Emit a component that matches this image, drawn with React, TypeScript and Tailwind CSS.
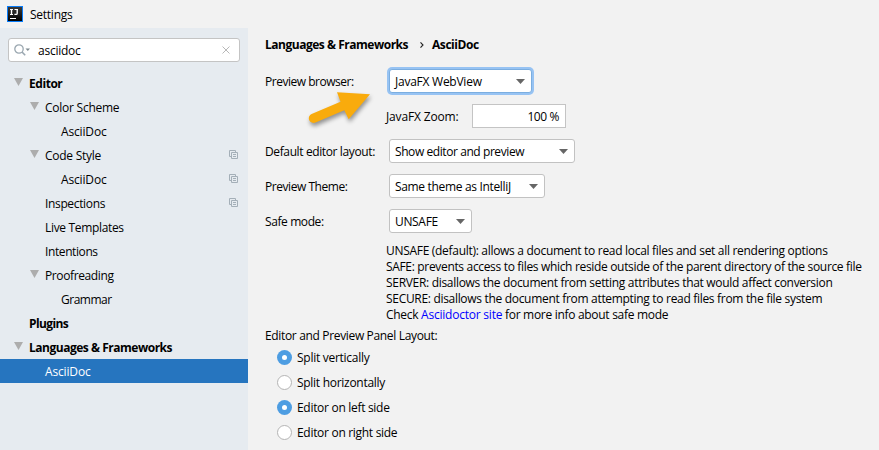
import React from 'react';

type Node = { label: string; indent: string; arrow?: boolean; bold?: boolean; copy?: boolean; selected?: boolean; track: string };

const nodes: Node[] = [
  { label: 'Editor', indent: 'pl-[13px]', arrow: true, bold: true, track: 'tracking-[-0.45px]' },
  { label: 'Color Scheme', indent: 'pl-[29px]', arrow: true, track: 'tracking-[-0.25px]' },
  { label: 'AsciiDoc', indent: 'pl-[45px]', track: 'tracking-[-0.15px]' },
  { label: 'Code Style', indent: 'pl-[29px]', arrow: true, copy: true, track: 'tracking-[-0.25px]' },
  { label: 'AsciiDoc', indent: 'pl-[45px]', copy: true, track: 'tracking-[-0.15px]' },
  { label: 'Inspections', indent: 'pl-[29px]', copy: true, track: 'tracking-[-0.35px]' },
  { label: 'Live Templates', indent: 'pl-[29px]', track: 'tracking-[-0.33px]' },
  { label: 'Intentions', indent: 'pl-[29px]', track: 'tracking-[-0.4px]' },
  { label: 'Proofreading', indent: 'pl-[29px]', arrow: true, track: 'tracking-[-0.38px]' },
  { label: 'Grammar', indent: 'pl-[45px]', track: 'tracking-[-0.5px]' },
  { label: 'Plugins', indent: 'pl-[13px]', bold: true, track: 'tracking-[-0.6px]' },
  { label: 'Languages & Frameworks', indent: 'pl-[13px]', arrow: true, bold: true, track: 'tracking-[-0.48px]' },
  { label: 'AsciiDoc', indent: 'pl-[29px]', selected: true, track: 'tracking-[-0.15px]' },
];

function CopyIcon() {
  return (
    <svg className="mr-[10px] mb-px ml-auto h-[9px] w-[9px]" viewBox="0 0 9 9" fill="none" stroke="#a4afb8">
      <path d="M2.5 6.5h-2v-6h6v2M2.5 2.5h6v6h-6zM4 4.5h3M4 6.5h3" />
    </svg>
  );
}

function TreeRow({ node }: { node: Node }) {
  return (
    <div className={`flex h-6 items-center ${node.indent} ${node.selected ? 'bg-[#2675bf] text-white' : ''}`}>
      <span className="flex w-4 shrink-0">
        {node.arrow && (
          <svg className="mb-0.5 ml-px h-2 w-[9px]" viewBox="0 0 9 8">
            <path d="M0 0h9L4.5 8z" fill="#adadad" />
          </svg>
        )}
      </span>
      <span className={`pt-0.5 ${node.bold ? 'font-bold' : ''} ${node.track}`}>{node.label}</span>
      {node.copy && <CopyIcon />}
    </div>
  );
}

function Select({ label, width, track, focused }: { label: string; width: string; track: string; focused?: boolean }) {
  return (
    <div
      className={`flex h-6 items-center rounded-[3px] border bg-white pr-[6px] pl-[5px] ${width} ${
        focused ? 'border-[#7baee0] ring-2 ring-[#97c3f3]' : 'border-[#c2c2c2]'
      }`}
    >
      <span className={`pt-0.5 ${track}`}>{label}</span>
      <svg className="ml-auto h-[5px] w-[9px]" viewBox="0 0 9 5">
        <path d="M0 0h9L4.5 5z" fill="#666" />
      </svg>
    </div>
  );
}

function Field({ label, track, children }: { label: string; track: string; children: React.ReactNode }) {
  return (
    <div className="flex h-6 items-center">
      <span className={`w-[124px] shrink-0 pt-0.5 ${track}`}>{label}</span>
      {children}
    </div>
  );
}

function Radio({ label, checked, track }: { label: string; checked?: boolean; track: string }) {
  return (
    <div className="flex h-[25px] items-center gap-[5px]">
      <span
        className={`flex size-[15px] items-center justify-center rounded-full ${
          checked ? 'bg-[#4d9de2]' : 'border border-[#b4b4b4] bg-white'
        }`}
      >
        {checked && <span className="size-[5px] rounded-full bg-white" />}
      </span>
      <span className={`pt-px ${track}`}>{label}</span>
    </div>
  );
}

export default function App() {
  return (
    <div className="relative flex h-[450px] w-[879px] flex-col overflow-hidden bg-[#f2f2f2] font-['Open_Sans','Noto_Sans',sans-serif] text-[12px] leading-4 whitespace-nowrap text-black">
      <header className="flex h-7 shrink-0 items-center pl-[7px]">
        <svg className="size-4" viewBox="0 0 16 16">
          <defs>
            <linearGradient id="tile" x1="0" y1="0" x2="0" y2="1">
              <stop offset="0" stopColor="#3a3a3a" />
              <stop offset="1" stopColor="#000" />
            </linearGradient>
          </defs>
          <path d="M0 0h16v16H0z" fill="#087cfa" />
          <path d="M1 1h14v14H1z" fill="url(#tile)" />
          <path d="M3 3.5h3M3 8.5h3M7.5 3.5H11M3 12.5h6" stroke="#fff" fill="none" />
          <path d="M4.5 3v6M10.2 3v4.2q0 1.2-1 1.2H7.4" stroke="#fff" strokeWidth="1.4" fill="none" />
        </svg>
        <span className="ml-[7px] pt-0.5 tracking-[-0.25px]">Settings</span>
      </header>
      <div className="flex min-h-0 flex-1">
        <aside className="w-[248px] shrink-0 bg-[#e6ebf0] pt-[10px]">
          <div className="ml-2 flex h-6 w-[232px] items-center rounded-[3px] border border-[#c4c4c4] bg-white pl-[5px]">
            <svg className="h-3 w-4" viewBox="0 0 16 12" fill="none" stroke="#9aa7b0" strokeWidth="1.3">
              <circle cx="5" cy="5" r="4.2" />
              <path d="M8 8l3.2 3.2" strokeWidth="1.6" />
              <path d="M11.5 4.5h4.6L13.8 7z" fill="#7f8b91" stroke="none" />
            </svg>
            <span className="ml-[8px] pt-0.5 tracking-[-0.25px]">asciidoc</span>
            <svg className="mr-[9px] ml-auto size-2" viewBox="0 0 8 8" stroke="#b8b8b8">
              <path d="M.5.5l7 7M7.5.5l-7 7" />
            </svg>
          </div>
          <div className="mt-[9px]">
            {nodes.map((node, i) => (
              <TreeRow key={i} node={node} />
            ))}
          </div>
        </aside>
        <main className="flex-1 pt-[9px] pl-[17px]">
          <div className="flex font-bold">
            <span className="w-[155px] tracking-[-0.48px]">Languages &amp; Frameworks</span>
            <svg className="mt-[5px] mr-[8px] h-[6px] w-1" viewBox="0 0 4 6" fill="none" stroke="#222" strokeWidth="1.1">
              <path d="M.5.4L3 3 .5 5.6" />
            </svg>
            <span className="tracking-[-0.43px]">AsciiDoc</span>
          </div>
          <div className="mt-4 flex flex-col gap-[11px]">
            <Field label="Preview browser:" track="tracking-[-0.48px]">
              <Select label="JavaFX WebView" width="w-[143px]" track="tracking-[-0.25px]" focused />
            </Field>
            <div className="flex h-6 items-center pl-[121px]">
              <span className="w-[86px] pt-0.5 tracking-[-0.15px]">JavaFX Zoom:</span>
              <div className="flex h-6 w-[94px] items-center justify-end border border-[#c4c4c4] bg-white pr-[6px]">
                <span className="pt-0.5 tracking-[-0.4px]">100 %</span>
              </div>
            </div>
            <Field label="Default editor layout:" track="tracking-[-0.38px]">
              <Select label="Show editor and preview" width="w-[186px]" track="tracking-[-0.42px]" />
            </Field>
            <Field label="Preview Theme:" track="tracking-[-0.45px]">
              <Select label="Same theme as IntelliJ" width="w-[156px]" track="tracking-[-0.33px]" />
            </Field>
            <Field label="Safe mode:" track="tracking-[-0.4px]">
              <Select label="UNSAFE" width="w-[83px]" track="tracking-[-0.33px]" />
            </Field>
          </div>
          <div className="mt-[10px] flex flex-col pl-[121px]">
            <span className="tracking-[-0.3px]">UNSAFE (default): allows a document to read local files and set all rendering options</span>
            <span className="tracking-[-0.33px]">SAFE: prevents access to files which reside outside of the parent directory of the source file</span>
            <span className="tracking-[-0.31px]">SERVER: disallows the document from setting attributes that would affect conversion</span>
            <span className="tracking-[-0.31px]">SECURE: disallows the document from attempting to read files from the file system</span>
            <span className="tracking-[-0.3px]">
              Check <a className="tracking-[-0.22px] text-[#0000ff]">Asciidoctor site</a> for more info about safe mode
            </span>
          </div>
          <div className="mt-[5px] tracking-[-0.34px]">Editor and Preview Panel Layout:</div>
          <div className="mt-px pl-3">
            <Radio label="Split vertically" checked track="tracking-[-0.27px]" />
            <Radio label="Split horizontally" track="tracking-[-0.28px]" />
            <Radio label="Editor on left side" checked track="tracking-[-0.3px]" />
            <Radio label="Editor on right side" track="tracking-[-0.3px]" />
          </div>
        </main>
      </div>
      <svg className="absolute top-[82px] left-[300px] h-[52px] w-[80px] drop-shadow-[1px_3px_2px_rgba(0,0,0,0.4)]" viewBox="300 82 80 52">
        <path d="M337 92.2L370 94.2 348.7 119.3 344.3 110.3 315.5 122.5A4.7 4.7 0 0 1 311.6 113.9L340.5 101.7z" fill="#f9ab0c" />
      </svg>
    </div>
  );
}
